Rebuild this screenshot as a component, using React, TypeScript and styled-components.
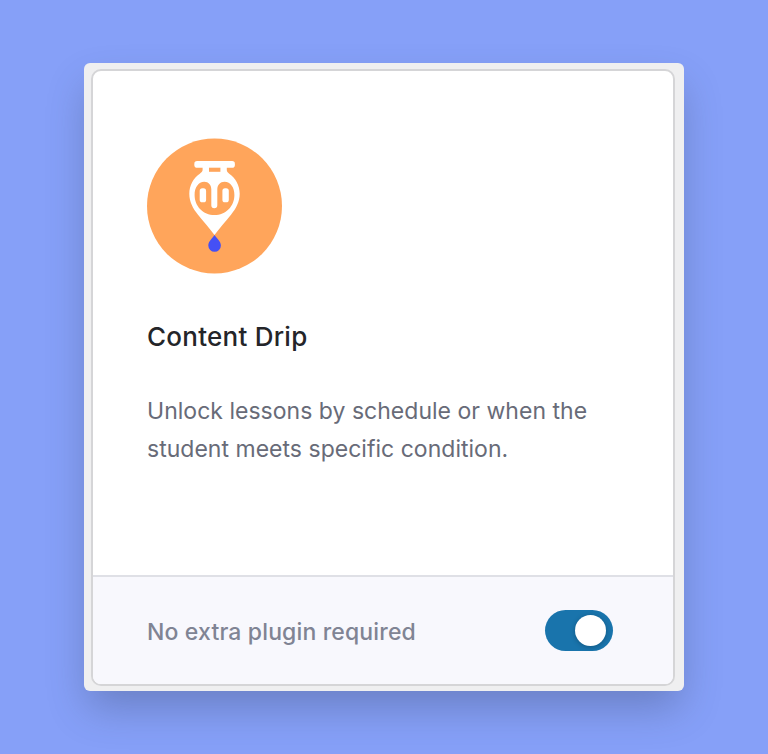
import { useState } from 'react';
import styled, { createGlobalStyle } from 'styled-components';

type AddonProps = {
    title: string;
    description: string;
    note: string;
};

const DripIcon = () => (
    <svg width="135" height="136" viewBox="0 -0.5 135 136" aria-hidden="true">
        <circle cx="67.5" cy="67.5" r="67.5" fill="#ffa55b" />
        {/* flask */}
        <rect x="47.3" y="22.6" width="40.6" height="6.6" rx="2.8" fill="#fff" />
        <path
            d="M55.6 28h24.2v3.6c0 1.6.9 2.6 2.4 3.6 6.4 4.4 10.5 11.6 10.5 20 0 8.2-3.6 14.4-8.7 21.1-5.2 6.8-11.6 13.4-16.5 20.3-4.9-6.9-11.3-13.5-16.5-20.3-5.1-6.7-8.7-12.9-8.7-21.1 0-8.4 4.1-15.6 10.5-20 1.5-1 2.8-2 2.8-3.6z"
            fill="#fff"
        />
        <rect x="62" y="29.2" width="11.4" height="4.1" fill="#ffa55b" />
        <path
            d="M57.3 43.2c4.2 0 7 3.3 7 7.5v16.1a3 3 0 0 0 6 0V50.7c0-4.2 2.9-7.5 7.2-7.5 6.2 0 9.9 6 9.9 13.2 0 11.4-8.7 20.1-19.9 20.1s-19.9-8.7-19.9-20.1c0-7.2 3.7-13.2 9.7-13.2z"
            fill="#ffa55b"
        />
        <rect x="52.7" y="49.8" width="6.4" height="14" rx="2.6" fill="#fff" />
        <rect x="75.4" y="49.8" width="6.4" height="14" rx="2.6" fill="#fff" />
        {/* drop */}
        <path
            d="M67.5 96.4c2.3 3.2 6.4 6.4 6.4 10.6a6.3 6.3 0 0 1-12.6 0c0-4.2 4-7.4 6.2-10.6z"
            fill="#4550f5"
        />
    </svg>
);

const AddonCard = ({ title, description, note }: AddonProps) => {
    const [isEnabled, setIsEnabled] = useState(true);

    const handleToggle = (): void => {
        setIsEnabled(!isEnabled);
    };

    return (
        <Frame>
            <Card>
                <Body>
                    <DripIcon />
                    <Title>{title}</Title>
                    <Description>{description}</Description>
                </Body>
                <Footer>
                    <Note>{note}</Note>
                    <Switch
                        type="button"
                        role="switch"
                        aria-checked={isEnabled}
                        aria-label={title}
                        $isOn={isEnabled}
                        onClick={handleToggle}
                    >
                        <Knob />
                    </Switch>
                </Footer>
            </Card>
        </Frame>
    );
};

const App = () => (
    <>
        <GlobalStyle />
        <Page>
            <AddonCard
                title="Content Drip"
                description="Unlock lessons by schedule or when the student meets specific condition."
                note="No extra plugin required"
            />
        </Page>
    </>
);

const GlobalStyle = createGlobalStyle`
    * {
        box-sizing: border-box;
    }
    body {
        margin: 0;
        background-color: #86a0f8;
        font-family: Inter, 'Liberation Sans', sans-serif;
    }
`;

const Page = styled.main`
    display: flex;
    justify-content: center;
    align-items: center;
    height: 754px;
`;

const Frame = styled.div`
    width: 600px;
    height: 628px;
    padding: 6px 9px 5px 7px;
    border-radius: 6px;
    background-color: #efeff0;
    box-shadow: 0 20px 40px -4px rgba(50, 60, 90, 0.33);
`;

const Card = styled.section`
    display: flex;
    flex-direction: column;
    height: 100%;
    border: 2px solid #d5d5d7;
    border-radius: 10px;
    background-color: #fff;
    overflow: hidden;
`;

const Body = styled.div`
    flex: 1;
    padding: 67px 54px 0;
    > svg {
        display: block;
    }
`;

const Title = styled.h2`
    margin: 45px 0 0;
    font-size: 26px;
    line-height: 36px;
    font-weight: 500;
    letter-spacing: 0.25px;
    color: #242529;
`;

const Description = styled.p`
    width: 460px;
    margin: 37px 0 0;
    font-size: 23px;
    line-height: 38px;
    letter-spacing: 0.02px;
    color: #686b78;
`;

const Footer = styled.div`
    display: flex;
    justify-content: space-between;
    align-items: center;
    height: 109px;
    padding: 0 60px 0 54px;
    border-top: 2px solid #dfe0e6;
    background-color: #f8f8fd;
`;

const Note = styled.span`
    padding-top: 3px;
    font-size: 23px;
    font-weight: 500;
    line-height: 30px;
    letter-spacing: 0.15px;
    color: #808494;
`;

const Switch = styled.button<{ $isOn: boolean }>`
    display: flex;
    justify-content: ${({ $isOn }) => ($isOn ? 'flex-end' : 'flex-start')};
    align-items: center;
    width: 68px;
    height: 41px;
    padding: 0 7px;
    border: none;
    border-radius: 21px;
    background-color: ${({ $isOn }) => ($isOn ? '#1974ac' : '#c5c9d6')};
    cursor: pointer;
`;

const Knob = styled.span`
    width: 31px;
    height: 31px;
    border-radius: 50%;
    background-color: #fff;
    box-shadow: 0 1px 5px rgba(0, 0, 0, 0.25);
`;

export default App;
